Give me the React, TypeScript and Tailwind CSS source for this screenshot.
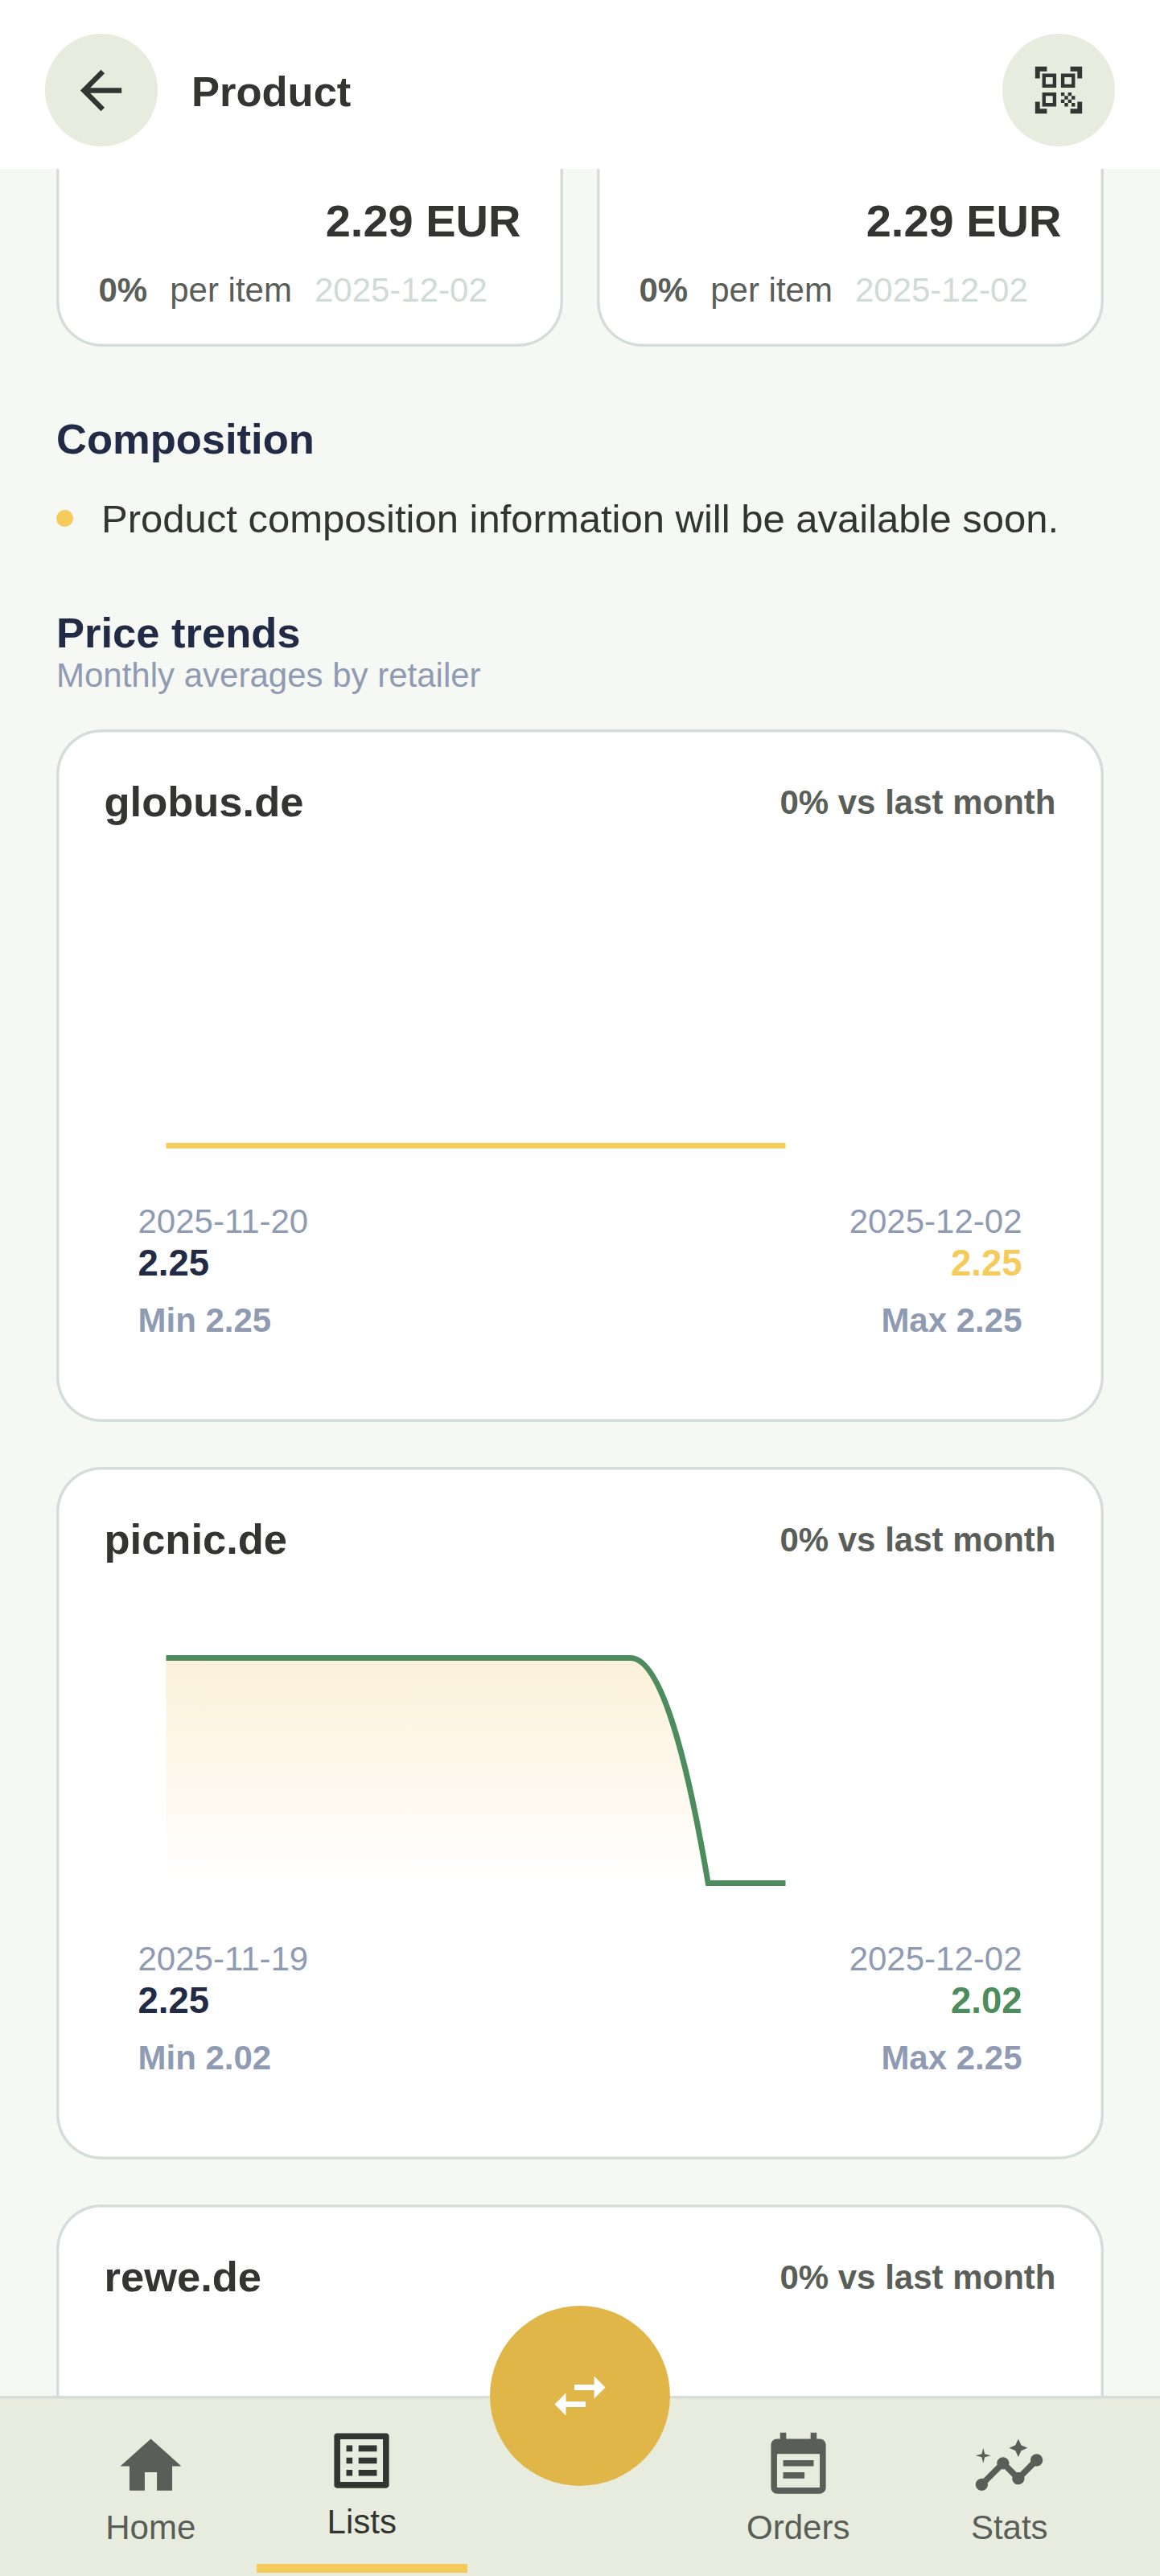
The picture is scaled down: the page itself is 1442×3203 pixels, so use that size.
import { MdArrowBack, MdEventNote, MdHome, MdInsights, MdListAlt, MdQrCodeScanner, MdSwapHoriz } from "react-icons/md";
import type { IconType } from "react-icons";

const LINE_TOP = 117.5;
const LINE_BOTTOM = 397.5;

type History = {
  from: string;
  to: string;
  first: string;
  last: string;
  min: string;
  max: string;
  tone: string;
  stroke: string;
  dropped: boolean;
};

type Trend = { shop: string; history?: History };

const trends: Trend[] = [
  {
    shop: "globus.de",
    history: { from: "2025-11-20", to: "2025-12-02", first: "2.25", last: "2.25", min: "2.25", max: "2.25", tone: "text-[#f5cb5c]", stroke: "#f5cb5c", dropped: false },
  },
  {
    shop: "picnic.de",
    history: { from: "2025-11-19", to: "2025-12-02", first: "2.25", last: "2.02", min: "2.02", max: "2.25", tone: "text-[#4d8c5c]", stroke: "#4d8c5c", dropped: true },
  },
  { shop: "rewe.de" },
];

function OfferCard() {
  return (
    <div className="-mt-[60px] h-[280.5px] flex-1 rounded-[56px] bg-white px-[52.5px] pt-[89.5px] shadow-[inset_0_0_0_3.5px_#d5ddd9]">
      <div className="text-right text-[56px] leading-[70px] font-bold text-[#333533]">2.29 EUR</div>
      <div className="mt-[23px] flex gap-7 text-[42px] leading-[56px] whitespace-nowrap text-[#5a5e58]">
        <span className="font-bold">0%</span>
        <span>per item</span>
        <span className="text-[#cfdbd5]">2025-12-02</span>
      </div>
    </div>
  );
}

function TrendChart({ stroke, dropped }: { stroke: string; dropped: boolean }) {
  const curve = `M76.5 ${LINE_TOP}H653.75Q703 ${LINE_TOP} 750.25 ${LINE_BOTTOM}`;
  return (
    <svg className="block h-[467px] w-full" viewBox="0 0 1183 467" fill="none">
      <defs>
        <linearGradient id="trend-fill" x1="0" y1={LINE_TOP} x2="0" y2={LINE_BOTTOM} gradientUnits="userSpaceOnUse">
          <stop offset="0" stopColor="#fcf1d8" />
          <stop offset="1" stopColor="#ffffff" />
        </linearGradient>
      </defs>
      {dropped ? (
        <>
          <path d={`${curve}H76.5Z`} fill="url(#trend-fill)" />
          <path d={`${curve}H846.5`} stroke={stroke} strokeWidth="7" />
        </>
      ) : (
        <path d={`M76.5 ${LINE_BOTTOM}H846.5`} stroke={stroke} strokeWidth="7" />
      )}
    </svg>
  );
}

function TrendHistory({ history }: { history: History }) {
  return (
    <>
      <TrendChart stroke={history.stroke} dropped={history.dropped} />
      <div className="-mt-px flex justify-between px-[42px] text-[42px] text-[#8f9bb3]">
        <div>
          <div className="pb-[2px] leading-[51px]">{history.from}</div>
          <div className="text-[45.5px] leading-[50px] font-bold text-[#222b45]">{history.first}</div>
          <div className="mt-[21px] leading-[50px] font-bold">Min {history.min}</div>
        </div>
        <div className="text-right">
          <div className="pb-[2px] leading-[51px]">{history.to}</div>
          <div className={`text-[45.5px] leading-[50px] font-bold ${history.tone}`}>{history.last}</div>
          <div className="mt-[21px] leading-[50px] font-bold">Max {history.max}</div>
        </div>
      </div>
    </>
  );
}

function TrendCard({ trend }: { trend: Trend }) {
  return (
    <article className="h-[861px] shrink-0 rounded-[56px] bg-white px-[59.5px] pt-[60px] shadow-[inset_0_0_0_3.5px_#d5ddd9]">
      <div className="flex h-[60px] items-center justify-between">
        <h3 className="text-[52.5px] leading-[60px] font-bold text-[#333533]">{trend.shop}</h3>
        <span className="pt-[2px] text-[42px] leading-[60px] font-bold text-[#5a5e58]">0% vs last month</span>
      </div>
      {trend.history && <TrendHistory history={trend.history} />}
    </article>
  );
}

function NavItem({ icon: Icon, label, active = false }: { icon: IconType; label: string; active?: boolean }) {
  return (
    <a
      className={
        active
          ? "mb-1 flex w-[262.5px] flex-col items-center border-b-[11px] border-[#f5cb5c] pt-8 text-[#333533]"
          : "flex w-[262.5px] flex-col items-center pt-[39px] text-[#5a5e58]"
      }
    >
      <Icon className="size-[91px]" />
      <span className="mt-[5px] text-[42px] leading-[52px]">{label}</span>
    </a>
  );
}

export default function App() {
  return (
    <div className="flex h-[3203px] w-[1442px] flex-col overflow-hidden bg-[#f6f8f3] font-['Liberation_Sans',Arial,sans-serif]">
      <header className="flex h-[210px] shrink-0 items-center bg-white px-14 pt-[14px]">
        <button className="flex size-[140px] items-center justify-center rounded-full bg-[#e8ecdf] text-[#333533]">
          <MdArrowBack className="mr-px size-[77px]" />
        </button>
        <h1 className="ml-[42px] flex-1 pt-1 text-[52.5px] leading-[60px] font-bold text-[#333533]">Product</h1>
        <button className="flex size-[140px] items-center justify-center rounded-full bg-[#e8ecdf] text-[#333533]">
          <MdQrCodeScanner className="size-[70px]" />
        </button>
      </header>

      <main className="flex min-h-0 flex-1 flex-col overflow-hidden px-[70px]">
        <div className="flex shrink-0 gap-[42px]">
          <OfferCard />
          <OfferCard />
        </div>

        <h2 className="mt-[85.5px] text-[52.5px] leading-[60px] font-bold text-[#222b45]">Composition</h2>
        <ul className="mt-[34px]">
          <li className="flex gap-[35px] text-[49px] leading-[70px] whitespace-nowrap text-[#333533]">
            <span className="mt-[23.5px] size-[21px] rounded-full bg-[#f5cb5c]" />
            Product composition information will be available soon.
          </li>
        </ul>

        <h2 className="mt-[77.5px] text-[52.5px] leading-[57px] font-bold text-[#222b45]">Price trends</h2>
        <p className="text-[42px] leading-[50px] text-[#8f9bb3]">Monthly averages by retailer</p>

        <div className="mt-[42px] flex flex-col gap-14">
          {trends.map((trend) => (
            <TrendCard key={trend.shop} trend={trend} />
          ))}
        </div>
      </main>

      <nav className="relative flex h-[224.5px] shrink-0 justify-between bg-[#e8ecdf] px-14 pt-[3.5px] shadow-[inset_0_3.5px_0_#d5ddd9]">
        <div className="flex">
          <NavItem icon={MdHome} label="Home" />
          <NavItem icon={MdListAlt} label="Lists" active />
        </div>
        <div className="flex">
          <NavItem icon={MdEventNote} label="Orders" />
          <NavItem icon={MdInsights} label="Stats" />
        </div>
        <button className="absolute -top-28 left-1/2 flex size-[224px] -translate-x-1/2 items-center justify-center rounded-full bg-[#dfb647] text-white">
          <MdSwapHoriz className="size-[84px]" />
        </button>
      </nav>
    </div>
  );
}
